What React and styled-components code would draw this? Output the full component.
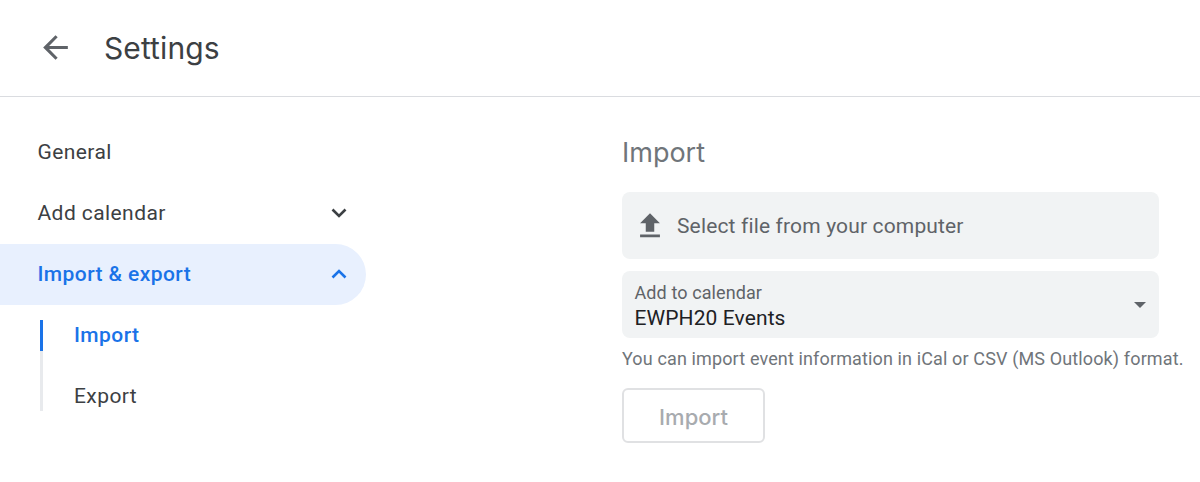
import React from 'react'
import styled, { createGlobalStyle } from 'styled-components'

const GlobalStyle = createGlobalStyle`
    html, body {
        margin: 0;
        padding: 0;
        background: #fff;
        font-family: Roboto, "Liberation Sans", sans-serif;
    }
`
const Page = styled.div`
    width: 1200px;
    height: 482px;
    overflow: hidden;
`
const Header = styled.header`
    display: flex;
    align-items: center;
    height: 96px;
    border-bottom: 1px solid #dadce0;
    padding-left: 37px;
`
const BackIcon = styled.svg`
    width: 37px;
    height: 37px;
    fill: #5f6368;
    margin-right: 30px;
    margin-top: -2px;
`
const Title = styled.h1`
    margin: 0;
    font-family: Inter, Roboto, sans-serif;
    font-size: 30px;
    font-weight: 400;
    letter-spacing: 0.1px;
    color: #3c4043;
    margin-top: -1px;
`
const Body = styled.div`
    display: flex;
`
const Sidebar = styled.nav`
    width: 366px;
    padding-top: 25px;
    flex-shrink: 0;
`
const NavItem = styled.div`
    display: flex;
    align-items: center;
    justify-content: space-between;
    box-sizing: border-box;
    height: 61px;
    padding: 0 18px 1px 37.5px;
    font-size: 21px;
    font-weight: ${p => (p.$active ? 500 : 400)};
    color: ${p => (p.$active ? '#1a73e8' : '#3c4043')};
    background: ${p => (p.$active ? '#e8f0fe' : 'transparent')};
    border-radius: ${p => (p.$active ? '0 31px 31px 0' : '0')};
    letter-spacing: 0.42px;
`
const Chevron = styled.svg`
    width: 18px;
    height: 12px;
    fill: none;
    stroke: ${p => (p.$active ? '#1a73e8' : '#3c4043')};
    stroke-width: 2.6;
`
const SubNav = styled.div`
    margin: 15px 0 0 40px;
    width: 326px;
`
const SubItem = styled.div`
    display: flex;
    align-items: center;
    box-sizing: border-box;
    height: 61px;
    padding: 0 0 1px 34px;
    font-size: 21px;
    font-weight: ${p => (p.$active ? 500 : 400)};
    color: ${p => (p.$active ? '#1a73e8' : '#3c4043')};
    letter-spacing: 0.42px;
`
const SubRail = styled.div`
    position: relative;
    border-left: 3px solid #e8eaed;
    height: 91px;
    &::before {
        content: '';
        position: absolute;
        left: -3px;
        top: 0;
        width: 3px;
        height: 31px;
        background: #1a73e8;
    }
`
const SubList = styled.div`
    position: absolute;
    top: -15px;
    left: -3px;
`
const Main = styled.main`
    margin-left: 256px;
    padding-top: 37px;
    width: 537px;
    flex-shrink: 0;
`
const Heading = styled.h2`
    margin: 0 0 20px;
    height: 38px;
    line-height: 38px;
    font-family: Inter, Roboto, sans-serif;
    font-size: 27px;
    font-weight: 400;
    color: #70757a;
`
const FileBox = styled.div`
    display: flex;
    align-items: center;
    gap: 10px;
    height: 67px;
    padding-left: 11px;
    background: #f1f3f4;
    border-radius: 8px;
    font-size: 21px;
    color: #5f6368;
    letter-spacing: 0.15px;
`
const UploadIcon = styled.svg`
    width: 34px;
    height: 34px;
    fill: #5f6368;
`
const SelectBox = styled.div`
    position: relative;
    height: 67px;
    margin-top: 12px;
    padding: 11px 13px 0 12.5px;
    box-sizing: border-box;
    background: #f1f3f4;
    border-radius: 8px;
`
const SelectLabel = styled.div`
    font-size: 18px;
    line-height: 22px;
    letter-spacing: 0.1px;
    color: #5f6368;
`
const SelectValue = styled.div`
    font-size: 21px;
    line-height: 29px;
    letter-spacing: 0.1px;
    color: #202124;
`
const Caret = styled.span`
    position: absolute;
    right: 13px;
    top: 31px;
    width: 0;
    height: 0;
    border-left: 6px solid transparent;
    border-right: 6px solid transparent;
    border-top: 6px solid #5f6368;
`
const Help = styled.p`
    margin: 10px 0 0;
    width: 580px;
    font-size: 18px;
    line-height: 21px;
    letter-spacing: 0.13px;
    color: #70757a;
    white-space: nowrap;
`
const ImportButton = styled.button`
    display: block;
    margin-top: 19px;
    width: 143px;
    height: 55px;
    padding: 3px 0 0;
    background: #fff;
    border: 2px solid #e0e1e3;
    border-radius: 6px;
    font-family: Inter, Roboto, sans-serif;
    font-size: 22px;
    font-weight: 500;
    color: #a8abaf;
`

function ChevronIcon({ up, active }) {
    return (
        <Chevron viewBox="0 0 18 12" $active={active}>
            <path d={up ? 'M2.5 9.5 9 3l6.5 6.5' : 'M2.5 2.5 9 9l6.5-6.5'} />
        </Chevron>
    )
}

export default function App() {
    return (
        <Page>
            <GlobalStyle />
            <Header>
                <BackIcon viewBox="0 0 24 24">
                    <path d="M20 11H7.83l5.59-5.59L12 4l-8 8 8 8 1.41-1.41L7.83 13H20v-2z" />
                </BackIcon>
                <Title>Settings</Title>
            </Header>
            <Body>
                <Sidebar>
                    <NavItem>General</NavItem>
                    <NavItem>
                        Add calendar
                        <ChevronIcon />
                    </NavItem>
                    <NavItem $active>
                        Import &amp; export
                        <ChevronIcon up active />
                    </NavItem>
                    <SubNav>
                        <SubRail>
                            <SubList>
                                <SubItem $active>Import</SubItem>
                                <SubItem>Export</SubItem>
                            </SubList>
                        </SubRail>
                    </SubNav>
                </Sidebar>
                <Main>
                    <Heading>Import</Heading>
                    <FileBox>
                        <UploadIcon viewBox="0 0 24 24">
                            <path d="M5 20h14v-2H5v2zM9 16h6v-6h4l-7-7-7 7h4v6z" />
                        </UploadIcon>
                        Select file from your computer
                    </FileBox>
                    <SelectBox>
                        <SelectLabel>Add to calendar</SelectLabel>
                        <SelectValue>EWPH20 Events</SelectValue>
                        <Caret />
                    </SelectBox>
                    <Help>You can import event information in iCal or CSV (MS Outlook) format.</Help>
                    <ImportButton disabled>Import</ImportButton>
                </Main>
            </Body>
        </Page>
    )
}
